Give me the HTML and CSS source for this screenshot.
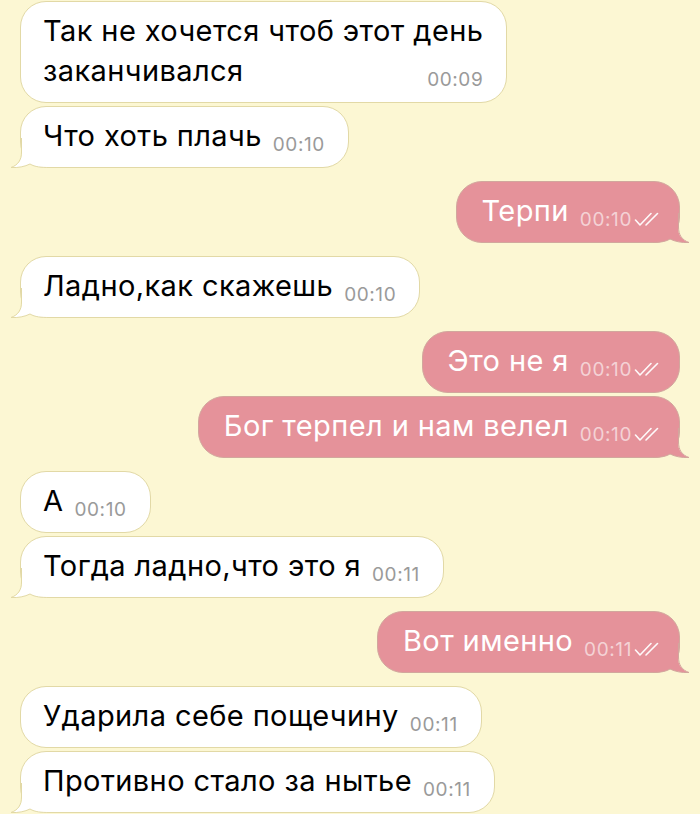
FILE: index.html
```html
<!DOCTYPE html>
<html lang="ru">
<head>
    <meta charset="UTF-8">
    <meta name="viewport" content="width=device-width, initial-scale=1.0">
    <title>Чат</title>
<link rel="stylesheet" href="styles.css">
</head>
<body>
    <div class="chat">

        <!-- входящие -->
        <div class="group in">
            <div class="bubble long">Так не хочется чтоб этот день<br>заканчивался<span class="meta">00:09</span></div>
            <div class="bubble">Что хоть плачь<span class="meta">00:10</span>
                <svg class="tail" viewBox="0 0 40 30"><path class="f" d="M12 0 L12 14 C12 22 8.5 27 1 29.5 C8 30 15 28.5 20 26 C25 29 31 29.5 40 29.5 L40 0 Z"/><path class="s" d="M11.5 0 L11.5 14 C11.5 22 8 27 1 29.5 C8 30 15 28.5 20 26 C25 29 31 29.5 40 29.5"/></svg>
            </div>
        </div>

        <div class="group out">
            <div class="bubble">Терпи<span class="meta">00:10<svg class="check" viewBox="0 0 26 14"><path d="M1.5 8 L6 13 L17 1.5 M12 13 L23.5 1.5"/></svg></span>
                <svg class="tail" viewBox="0 0 40 30"><path class="f" d="M12 0 L12 14 C12 22 8.5 27 1 29.5 C8 30 15 28.5 20 26 C25 29 31 29.5 40 29.5 L40 0 Z"/><path class="s" d="M11.5 0 L11.5 14 C11.5 22 8 27 1 29.5 C8 30 15 28.5 20 26 C25 29 31 29.5 40 29.5"/></svg>
            </div>
        </div>

        <div class="group in">
            <div class="bubble">Ладно,как скажешь<span class="meta">00:10</span>
                <svg class="tail" viewBox="0 0 40 30"><path class="f" d="M12 0 L12 14 C12 22 8.5 27 1 29.5 C8 30 15 28.5 20 26 C25 29 31 29.5 40 29.5 L40 0 Z"/><path class="s" d="M11.5 0 L11.5 14 C11.5 22 8 27 1 29.5 C8 30 15 28.5 20 26 C25 29 31 29.5 40 29.5"/></svg>
            </div>
        </div>

        <div class="group out">
            <div class="bubble">Это не я<span class="meta">00:10<svg class="check" viewBox="0 0 26 14"><path d="M1.5 8 L6 13 L17 1.5 M12 13 L23.5 1.5"/></svg></span></div>
            <div class="bubble">Бог терпел и нам велел<span class="meta">00:10<svg class="check" viewBox="0 0 26 14"><path d="M1.5 8 L6 13 L17 1.5 M12 13 L23.5 1.5"/></svg></span>
                <svg class="tail" viewBox="0 0 40 30"><path class="f" d="M12 0 L12 14 C12 22 8.5 27 1 29.5 C8 30 15 28.5 20 26 C25 29 31 29.5 40 29.5 L40 0 Z"/><path class="s" d="M11.5 0 L11.5 14 C11.5 22 8 27 1 29.5 C8 30 15 28.5 20 26 C25 29 31 29.5 40 29.5"/></svg>
            </div>
        </div>

        <div class="group in">
            <div class="bubble">А<span class="meta">00:10</span></div>
            <div class="bubble">Тогда ладно,что это я<span class="meta">00:11</span>
                <svg class="tail" viewBox="0 0 40 30"><path class="f" d="M12 0 L12 14 C12 22 8.5 27 1 29.5 C8 30 15 28.5 20 26 C25 29 31 29.5 40 29.5 L40 0 Z"/><path class="s" d="M11.5 0 L11.5 14 C11.5 22 8 27 1 29.5 C8 30 15 28.5 20 26 C25 29 31 29.5 40 29.5"/></svg>
            </div>
        </div>

        <div class="group out">
            <div class="bubble">Вот именно<span class="meta">00:11<svg class="check" viewBox="0 0 26 14"><path d="M1.5 8 L6 13 L17 1.5 M12 13 L23.5 1.5"/></svg></span>
                <svg class="tail" viewBox="0 0 40 30"><path class="f" d="M12 0 L12 14 C12 22 8.5 27 1 29.5 C8 30 15 28.5 20 26 C25 29 31 29.5 40 29.5 L40 0 Z"/><path class="s" d="M11.5 0 L11.5 14 C11.5 22 8 27 1 29.5 C8 30 15 28.5 20 26 C25 29 31 29.5 40 29.5"/></svg>
            </div>
        </div>

        <div class="group in">
            <div class="bubble">Ударила себе пощечину<span class="meta">00:11</span></div>
            <div class="bubble">Противно стало за нытье<span class="meta">00:11</span>
                <svg class="tail" viewBox="0 0 40 30"><path class="f" d="M12 0 L12 14 C12 22 8.5 27 1 29.5 C8 30 15 28.5 20 26 C25 29 31 29.5 40 29.5 L40 0 Z"/><path class="s" d="M11.5 0 L11.5 14 C11.5 22 8 27 1 29.5 C8 30 15 28.5 20 26 C25 29 31 29.5 40 29.5"/></svg>
            </div>
        </div>

    </div>
</body>
</html>
```

FILE: styles.css
```css
body {
    margin: 0;
    background-color: #fcf7d3;
    font-family: Inter, "Liberation Sans", Arial, sans-serif;
}

.chat {
    display: flex;
    flex-direction: column;
    gap: 13px;
    padding: 1px 20px 0;
}

.group {
    display: flex;
    flex-direction: column;
    gap: 3px;
}

.group.in {
    align-items: flex-start;
}

.group.out {
    align-items: flex-end;
}

/* пузырь сообщения */
.bubble {
    position: relative;
    isolation: isolate;
    background-color: #fff;
    border: 1px solid #e2d9a6;
    border-radius: 26px;
    padding: 9px 23px 11px 22px;
    font-size: 29px;
    line-height: 40px;
    letter-spacing: 0.4px;
    color: #000;
    white-space: nowrap;
}

.out .bubble {
    background-color: #e5929a;
    border-color: #d2a79d;
    color: #fff;
    padding-left: 25px;
    padding-right: 19px;
}

/* время */
.meta {
    font-size: 19px;
    line-height: 18px;
    color: #9a9a9a;
    margin-left: 11px;
    vertical-align: -5px;
    letter-spacing: 0.6px;
}

.out .meta {
    color: rgba(255, 255, 255, 0.6);
}

.long .meta {
    float: right;
    margin-top: 20px;
}

.check {
    width: 26px;
    height: 14px;
    margin-left: 2px;
    fill: none;
    stroke: rgba(255, 255, 255, 0.95);
    stroke-width: 1.6;
    stroke-linecap: round;
    stroke-linejoin: round;
}

/* хвостик */
.tail {
    position: absolute;
    z-index: -1;
    left: -11px;
    bottom: -1px;
    width: 40px;
    height: 30px;
}

.out .tail {
    left: auto;
    right: -11px;
    transform: scaleX(-1);
}

.tail .f {
    fill: #fff;
}

.tail .s {
    fill: none;
    stroke: #e2d9a6;
    stroke-width: 1;
}

.out .tail .f {
    fill: #e5929a;
}

.out .tail .s {
    stroke: #d2a79d;
}
```
